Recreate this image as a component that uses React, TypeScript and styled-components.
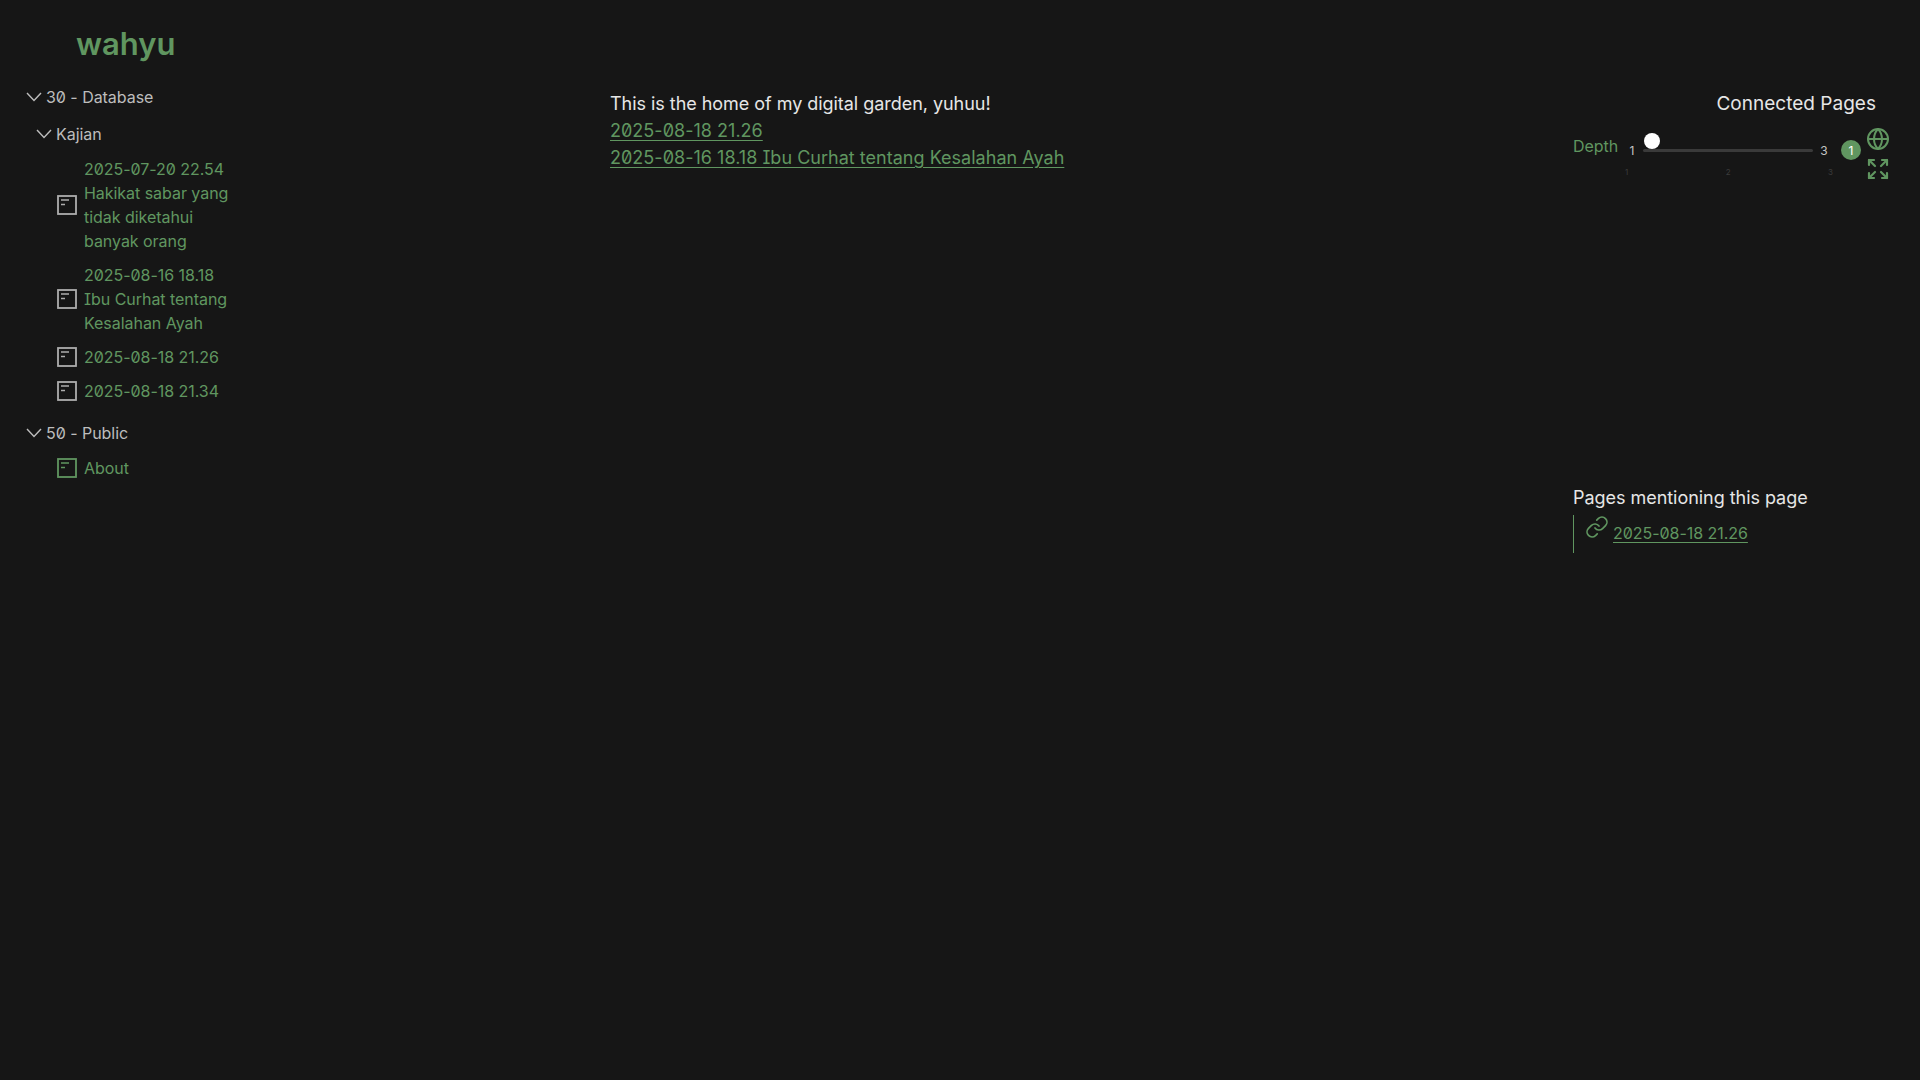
import React from 'react';
import styled, { createGlobalStyle } from 'styled-components';
import { Expand, Globe, Link } from 'lucide-react';

const GREEN = '#609660';

const GlobalStyle = createGlobalStyle`
	html, body {
		margin: 0;
		height: 100%;
		background: #161616;
		color: #e6e6e6;
		font-family: Inter, "Noto Sans", sans-serif;
		font-weight: 380;
		font-feature-settings: "zero" 1, "cv08" 1, "calt" 0;
		letter-spacing: -0.04px;
	}
`;

// Small page glyph used in the tree
const PageIcon: React.FC = () => (
	<svg width="20" height="20" viewBox="0 0 20 20" fill="none" stroke="currentColor">
		<rect x="1" y="1" width="18" height="18" strokeWidth="1.8" />
		<path d="M4 5h8M4 9.5h4" strokeWidth="1.5" />
	</svg>
);

// Folder toggle, wider and flatter than the icon pack's chevron
const Chevron: React.FC = () => (
	<svg width="16" height="10" viewBox="0 0 16 10" fill="none" stroke="currentColor" strokeWidth="1.4">
		<path d="M1 1l7 7.5L15 1" />
	</svg>
);

type Node = { label: string };

const kajian: Node[] = [
	{ label: '2025-07-20 22.54 Hakikat sabar yang tidak diketahui banyak orang' },
	{ label: '2025-08-16 18.18 Ibu Curhat tentang Kesalahan Ayah' },
	{ label: '2025-08-18 21.26' },
	{ label: '2025-08-18 21.34' },
];

const App: React.FC = () => (
	<Page>
		<GlobalStyle />
		<Sidebar>
			<Title>wahyu</Title>
			<Folder>
				<Chevron />
				30 - Database
			</Folder>
			<SubFolder>
				<Chevron />
				Kajian
			</SubFolder>
			{kajian.map((n) => (
				<Leaf key={n.label}>
					<LeafIcon><PageIcon /></LeafIcon>
					<LeafLabel>{n.label}</LeafLabel>
				</Leaf>
			))}
			<PublicFolder>
				<Chevron />
				50 - Public
			</PublicFolder>
			<Leaf>
				<LeafIcon $active><PageIcon /></LeafIcon>
				<LeafLabel>About</LeafLabel>
			</Leaf>
		</Sidebar>

		<Main>
			<div>This is the home of my digital garden, yuhuu!</div>
			<div><TextLink href="#">2025-08-18 21.26</TextLink></div>
			<div><TextLink href="#">2025-08-16 18.18 Ibu Curhat tentang Kesalahan Ayah</TextLink></div>
		</Main>

		<Aside>
			<GraphTitle>Connected Pages</GraphTitle>
			<Controls>
				<DepthLabel>Depth</DepthLabel>
				<SliderBlock>
					<SliderRow>
						<SliderEnd>1</SliderEnd>
						<Track><Thumb /></Track>
						<SliderEnd>3</SliderEnd>
					</SliderRow>
					<Ticks>
						<span>1</span>
						<span>2</span>
						<span>3</span>
					</Ticks>
				</SliderBlock>
				<Badge>1</Badge>
				<IconColumn>
					<Globe size={24} strokeWidth={2} />
					<Expand size={24} strokeWidth={2.2} />
				</IconColumn>
			</Controls>

			<Mentions>
				<MentionsTitle>Pages mentioning this page</MentionsTitle>
				<MentionRow>
					<MentionIcon><Link size={24} strokeWidth={1.7} /></MentionIcon>
					<MentionLink href="#">2025-08-18 21.26</MentionLink>
				</MentionRow>
			</Mentions>
		</Aside>
	</Page>
);
App.displayName = 'App';
export default App;

// Styles
const Page = styled.div`
	display: grid;
	grid-template-columns: 610px 963px 347px;
	min-height: 1080px;
	background: #161616;
`;

const Sidebar = styled.nav`
	display: flex;
	flex-direction: column;
	align-items: flex-start;
	padding-top: 24px;
	font-size: 16px;
	color: #bdbdbd;
`;

const Title = styled.h1`
	margin: 0 0 21px 76px;
	font-size: 31px;
	line-height: 40px;
	font-weight: 600;
	letter-spacing: 0;
	color: ${GREEN};
`;

const Folder = styled.div`
	display: flex;
	align-items: center;
	gap: 4px;
	height: 24px;
	margin-left: 26px;
`;

const SubFolder = styled(Folder)`
	margin: 13px 0 11px 36px;
`;

const PublicFolder = styled(Folder)`
	margin-top: 8px;
	margin-bottom: 11px;
`;

const Leaf = styled.div`
	display: flex;
	align-items: center;
	gap: 7px;
	width: 175px;
	margin: 0 0 10px 57px;
`;

const LeafIcon = styled.span<{ $active?: boolean }>`
	display: flex;
	flex: none;
	color: ${(p) => (p.$active ? GREEN : '#adadad')};
`;

const LeafLabel = styled.span`
	font-size: 16px;
	line-height: 24px;
	color: ${GREEN};
`;

const Main = styled.main`
	padding-top: 90px;
	font-size: 18px;
	line-height: 27px;
	color: #e6e6e6;
`;

const TextLink = styled.a`
	color: ${GREEN};
	letter-spacing: 0.02px;
	text-decoration: underline;
	text-underline-offset: 3px;
`;

const Aside = styled.aside`
	display: flex;
	flex-direction: column;
	padding-top: 92px;
`;

const GraphTitle = styled.div`
	padding-right: 44px;
	text-align: right;
	font-size: 19px;
	line-height: 24px;
	letter-spacing: 0.02px;
	color: #e6e6e6;
`;

const Controls = styled.div`
	display: flex;
	align-items: flex-start;
	margin-top: 11px;
	color: ${GREEN};
`;

const DepthLabel = styled.span`
	width: 52px;
	margin-top: 7px;
	font-size: 16px;
	line-height: 24px;
`;

const SliderBlock = styled.div`
	width: 208px;
`;

const SliderRow = styled.div`
	display: flex;
	align-items: center;
	height: 28px;
	margin-top: 8px;
	font-size: 12px;
	color: #c4c4c4;
`;

const SliderEnd = styled.span`
	width: 14px;
	padding-top: 2px;
	text-align: center;
`;

const Track = styled.div`
	position: relative;
	width: 170px;
	height: 3px;
	margin: 3px 4px 0;
	border-radius: 2px;
	background: #3a3a3a;
`;

const Thumb = styled.span`
	position: absolute;
	left: 1px;
	top: -16px;
	width: 16px;
	height: 16px;
	border-radius: 50%;
	background: #fff;
`;

const Ticks = styled.div`
	display: flex;
	justify-content: space-between;
	width: 208px;
	margin-top: 3px;
	font-size: 8px;
	line-height: 12px;
	color: #3c3c3c;
`;

const Badge = styled.span`
	display: flex;
	align-items: center;
	justify-content: center;
	width: 20px;
	height: 20px;
	margin: 13px 0 0 8px;
	border-radius: 50%;
	background: ${GREEN};
	font-size: 12px;
	color: #fff;
`;

const IconColumn = styled.div`
	display: flex;
	flex-direction: column;
	gap: 6px;
	margin-left: 4.5px;
`;

const Mentions = styled.section`
	display: flex;
	flex-direction: column;
	margin-top: 303px;
`;

const MentionsTitle = styled.div`
	font-size: 18px;
	line-height: 27px;
	color: #e6e6e6;
`;

const MentionRow = styled.div`
	display: flex;
	align-items: flex-start;
	gap: 4px;
	height: 38px;
	margin-top: 4px;
	padding-left: 11px;
	border-left: 1px solid ${GREEN};
	color: ${GREEN};
`;

const MentionIcon = styled.span`
	display: flex;
`;

const MentionLink = styled.a`
	margin-top: 6px;
	font-size: 16px;
	line-height: 24px;
	color: ${GREEN};
	text-decoration: underline;
	text-underline-offset: 3px;
`;
